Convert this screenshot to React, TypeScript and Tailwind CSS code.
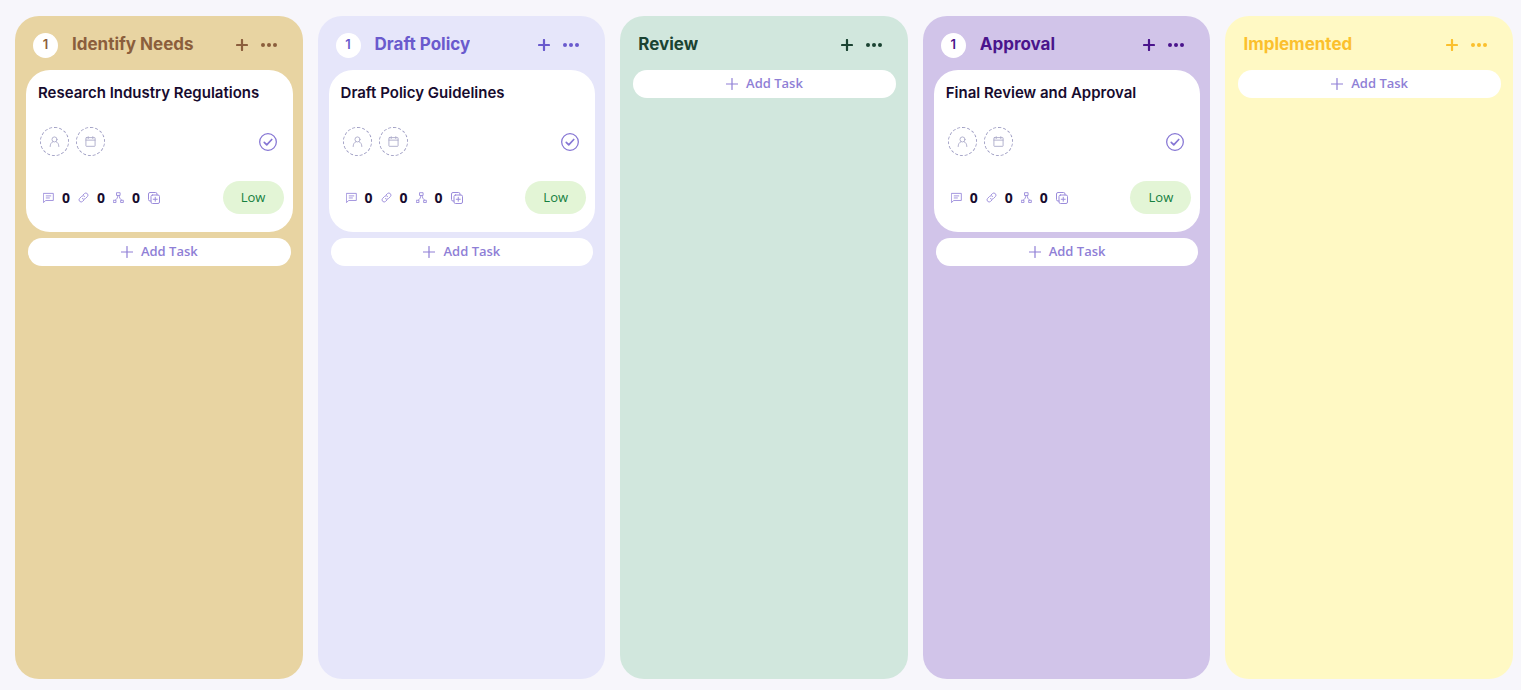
import type { ReactNode } from "react";

type Task = {
  title: string;
  comments: number;
  links: number;
  subtasks: number;
  priority: string;
};

type Column = {
  name: string;
  bg: string;
  text: string;
  tasks: Task[];
};

const columns: Column[] = [
  {
    name: "Identify Needs",
    bg: "bg-[#e8d4a2]",
    text: "text-[#8b5e3c]",
    tasks: [{ title: "Research Industry Regulations", comments: 0, links: 0, subtasks: 0, priority: "Low" }],
  },
  {
    name: "Draft Policy",
    bg: "bg-[#e6e6fa]",
    text: "text-[#6a5acd]",
    tasks: [{ title: "Draft Policy Guidelines", comments: 0, links: 0, subtasks: 0, priority: "Low" }],
  },
  { name: "Review", bg: "bg-[#d1e7dd]", text: "text-[#1b4332]", tasks: [] },
  {
    name: "Approval",
    bg: "bg-[#d1c4e9]",
    text: "text-[#4a148c]",
    tasks: [{ title: "Final Review and Approval", comments: 0, links: 0, subtasks: 0, priority: "Low" }],
  },
  { name: "Implemented", bg: "bg-[#fff9c4]", text: "text-[#fbc02d]", tasks: [] },
];

type IconProps = { children: ReactNode; className: string };

function Icon({ children, className }: IconProps) {
  return (
    <svg
      viewBox="0 0 24 24"
      fill="none"
      stroke="currentColor"
      strokeWidth="2"
      strokeLinecap="round"
      strokeLinejoin="round"
      aria-hidden="true"
      className={`shrink-0 ${className}`}
    >
      {children}
    </svg>
  );
}

function CommentIcon() {
  return (
    <Icon className="size-[11px]">
      <path d="M1.500 3h21v15.500H6l-4.500 4zM7 8.500h10M7 13h7" />
    </Icon>
  );
}

function LinkIcon() {
  return (
    <Icon className="size-[11px]">
      <path d="M11 6.500l3-3a4.600 4.600 0 0 1 6.500 6.500l-4.500 4.500a4.600 4.600 0 0 1-6.500 0" />
      <path d="M13 17.500l-3 3A4.600 4.600 0 0 1 3.500 14L8 9.500a4.600 4.600 0 0 1 6.500 0" />
    </Icon>
  );
}

function SubtaskIcon() {
  return (
    <Icon className="size-[11px]">
      <path d="M8.500 1.500h7v6h-7zM1.500 18h5v5h-5zM17.500 18h5v5h-5zM10.500 7.500c0 5-2 8-5.500 10.500M13.500 7.500c0 5 2 8 5.500 10.500" />
    </Icon>
  );
}

function CopyIcon() {
  return (
    <Icon className="size-3">
      <rect x="6" y="6" width="17" height="17" rx="3" />
      <path d="M18 6V4a3 3 0 0 0-3-3H4a3 3 0 0 0-3 3v11a3 3 0 0 0 3 3h2M14.500 10.500v8M10.500 14.500h8" />
    </Icon>
  );
}

function CircleButton({ label, children }: { label: string; children: ReactNode }) {
  return (
    <button
      type="button"
      aria-label={label}
      className="flex size-[29px] items-center justify-center rounded-full border border-dashed border-[#a09fc4] text-[#adaccb]"
    >
      {children}
    </button>
  );
}

function Count({ icon, value }: { icon: ReactNode; value: number }) {
  return (
    <span className="flex w-[35px] items-center gap-2">
      <span className="text-[#9b8cdb]">{icon}</span>
      <span className="font-['Noto_Sans',sans-serif] text-sm font-bold leading-4">{value}</span>
    </span>
  );
}

function TaskCard({ task }: { task: Task }) {
  return (
    <article className="mb-1.5 h-[162px] rounded-[24px] bg-white pl-3 pr-[9px] pt-3 text-[#170b2e]">
      <h3 className="truncate text-[15px] font-semibold leading-[22px]">{task.title}</h3>

      <div className="mt-[23px] flex items-center gap-[7px] pl-0.5 pr-1.5">
        <CircleButton label="Assign member">
          <Icon className="size-[11px]">
            <circle cx="12" cy="7.500" r="5.500" />
            <path d="M2.500 23c0-6 3-9.500 6-10.500M21.500 23c0-6-3-9.500-6-10.500" />
          </Icon>
        </CircleButton>
        <CircleButton label="Set due date">
          <Icon className="size-[11px]">
            <rect x="2" y="3.500" width="20" height="19" rx="1" />
            <path d="M2 9h20M7 1.500v4M17 1.500v4" />
          </Icon>
        </CircleButton>
        <button type="button" aria-label="Mark complete" className="ml-auto text-[#8676d4]">
          <Icon className="size-5">
            <circle cx="12" cy="12" r="10" strokeWidth="1.500" />
            <path d="M7.500 12.500l3 3 6-6.500" />
          </Icon>
        </button>
      </div>

      <div className="mt-[25px] flex items-center pl-[5px]">
        <Count icon={<CommentIcon />} value={task.comments} />
        <Count icon={<LinkIcon />} value={task.links} />
        <Count icon={<SubtaskIcon />} value={task.subtasks} />
        <button type="button" aria-label="Duplicate task" className="text-[#9b8cdb]">
          <CopyIcon />
        </button>
        <span className="ml-auto flex h-[33px] w-[61px] items-center justify-center rounded-full bg-[#e3f5d6] font-['Open_Sans',sans-serif] text-[13px] text-[#16803f]">
          {task.priority}
        </span>
      </div>
    </article>
  );
}

function BoardColumn({ column }: { column: Column }) {
  return (
    <section className={`min-w-0 flex-1 rounded-[24px] pl-[11px] pr-[10px] ${column.bg}`}>
      <header className={`flex h-[54px] items-center pl-[7px] pr-4 pt-1 ${column.text}`}>
        {column.tasks.length > 0 && (
          <span className="mr-3.5 flex size-[25px] items-center justify-center rounded-full bg-white text-[13px] font-semibold">
            {column.tasks.length}
          </span>
        )}
        <h2 className="truncate pb-0.5 text-[17px] font-bold leading-6">{column.name}</h2>
        <div className="ml-auto flex items-center gap-[13px]">
          <button type="button" aria-label={`Add task to ${column.name}`}>
            <svg viewBox="0 0 12 12" className="size-3" stroke="currentColor" strokeWidth="2.200" strokeLinecap="round">
              <path d="M6 1v10M1 6h10" />
            </svg>
          </button>
          <button type="button" aria-label={`${column.name} options`}>
            <svg viewBox="0 0 16 4" className="h-1 w-4" fill="currentColor">
              <circle cx="2" cy="2" r="2" />
              <circle cx="8" cy="2" r="2" />
              <circle cx="14" cy="2" r="2" />
            </svg>
          </button>
        </div>
      </header>

      {column.tasks.map((task) => (
        <TaskCard key={task.title} task={task} />
      ))}

      <div className="px-0.5">
        <button
          type="button"
          className="flex h-7 w-full items-center justify-center gap-2 rounded-full bg-white font-['Open_Sans',sans-serif] text-[13px] font-semibold text-[#8f7fd6]"
        >
          <svg viewBox="0 0 12 12" className="size-3" stroke="currentColor" strokeWidth="1.200" strokeLinecap="round">
            <path d="M6 0.500v11M0.500 6h11" />
          </svg>
          Add Task
        </button>
      </div>
    </section>
  );
}

export default function App() {
  return (
    <main className="flex min-h-screen gap-[15px] bg-[#f7f6fb] pb-[11px] pl-[15px] pr-2 pt-4 font-['Inter',sans-serif]">
      {columns.map((column) => (
        <BoardColumn key={column.name} column={column} />
      ))}
    </main>
  );
}
